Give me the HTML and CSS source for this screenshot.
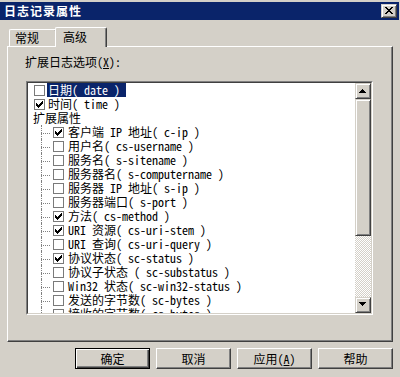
FILE: index.html
```html
<!DOCTYPE html>
<html lang="zh-CN">
<head>
<meta charset="utf-8">
<title>日志记录属性</title>
<link rel="stylesheet" href="styles.css">
</head>
<body>
<div class="window">
  <div class="titlebar">
    <span class="title">日志记录属性</span>
    <span class="close"><svg width="8" height="7" viewBox="0 0 8 7" shape-rendering="crispEdges"><path d="M0 0h2v1H0zM6 0h2v1H6zM1 1h2v1H1zM5 1h2v1H5zM2 2h4v1H2zM3 3h2v1H3zM2 4h4v1H2zM1 5h2v1H1zM5 5h2v1H5zM0 6h2v1H0zM6 6h2v1H6z"/></svg></span>
  </div>
  <div class="tabs">
    <div class="tab">常规</div>
    <div class="tab active">高级</div>
  </div>
  <div class="panel">
    <div class="label">扩展日志选项(<u>X</u>):</div>
    <div class="listbox">
      <div class="listbox-inner">
        <div class="items">
          <div class="row top"><span class="cb"></span><span class="text sel">日期( date )</span></div>
          <div class="row top"><span class="cb"><svg class="chk" width="7" height="7" viewBox="0 0 7 7" shape-rendering="crispEdges"><path d="M0 2h1v3H0zM1 3h1v3H1zM2 4h1v3H2zM3 3h1v3H3zM4 2h1v3H4zM5 1h1v3H5zM6 0h1v3H6z"/></svg></span><span class="text">时间( time )</span></div>
          <div class="row group"><span>扩展属性</span></div>
          <div class="row child"><span class="branch"></span><span class="cb"><svg class="chk" width="7" height="7" viewBox="0 0 7 7" shape-rendering="crispEdges"><path d="M0 2h1v3H0zM1 3h1v3H1zM2 4h1v3H2zM3 3h1v3H3zM4 2h1v3H4zM5 1h1v3H5zM6 0h1v3H6z"/></svg></span><span class="text">客户端 IP 地址( c-ip )</span></div>
          <div class="row child"><span class="branch"></span><span class="cb"></span><span class="text">用户名( cs-username )</span></div>
          <div class="row child"><span class="branch"></span><span class="cb"></span><span class="text">服务名( s-sitename )</span></div>
          <div class="row child"><span class="branch"></span><span class="cb"></span><span class="text">服务器名( s-computername )</span></div>
          <div class="row child"><span class="branch"></span><span class="cb"></span><span class="text">服务器 IP 地址( s-ip )</span></div>
          <div class="row child"><span class="branch"></span><span class="cb"></span><span class="text">服务器端口( s-port )</span></div>
          <div class="row child"><span class="branch"></span><span class="cb"><svg class="chk" width="7" height="7" viewBox="0 0 7 7" shape-rendering="crispEdges"><path d="M0 2h1v3H0zM1 3h1v3H1zM2 4h1v3H2zM3 3h1v3H3zM4 2h1v3H4zM5 1h1v3H5zM6 0h1v3H6z"/></svg></span><span class="text">方法( cs-method )</span></div>
          <div class="row child"><span class="branch"></span><span class="cb"><svg class="chk" width="7" height="7" viewBox="0 0 7 7" shape-rendering="crispEdges"><path d="M0 2h1v3H0zM1 3h1v3H1zM2 4h1v3H2zM3 3h1v3H3zM4 2h1v3H4zM5 1h1v3H5zM6 0h1v3H6z"/></svg></span><span class="text">URI 资源( cs-uri-stem )</span></div>
          <div class="row child"><span class="branch"></span><span class="cb"></span><span class="text">URI 查询( cs-uri-query )</span></div>
          <div class="row child"><span class="branch"></span><span class="cb"><svg class="chk" width="7" height="7" viewBox="0 0 7 7" shape-rendering="crispEdges"><path d="M0 2h1v3H0zM1 3h1v3H1zM2 4h1v3H2zM3 3h1v3H3zM4 2h1v3H4zM5 1h1v3H5zM6 0h1v3H6z"/></svg></span><span class="text">协议状态( sc-status )</span></div>
          <div class="row child"><span class="branch"></span><span class="cb"></span><span class="text">协议子状态 ( sc-substatus )</span></div>
          <div class="row child"><span class="branch"></span><span class="cb"></span><span class="text">Win32 状态( sc-win32-status )</span></div>
          <div class="row child"><span class="branch"></span><span class="cb"></span><span class="text">发送的字节数( sc-bytes )</span></div>
          <div class="row child"><span class="branch"></span><span class="cb"></span><span class="text">接收的字节数( cs-bytes )</span></div>
        </div>
        <div class="scrollbar">
          <div class="sb-btn up"><svg width="7" height="4" viewBox="0 0 7 4" shape-rendering="crispEdges"><path d="M3 0h1v1h1v1h1v1h1v1H0V3h1V2h1V1h1z"/></svg></div>
          <div class="thumb"></div>
          <div class="track"></div>
          <div class="sb-btn down"><svg width="7" height="4" viewBox="0 0 7 4" shape-rendering="crispEdges"><path d="M0 0h7v1h-1v1h-1v1h-1v1H3V3H2V2H1V1H0z"/></svg></div>
        </div>
      </div>
    </div>
  </div>
  <div class="buttons">
    <button class="btn default">确定</button>
    <button class="btn">取消</button>
    <button class="btn">应用(<u>A</u>)</button>
    <button class="btn">帮助</button>
  </div>
</div>
</body>
</html>
```

FILE: styles.css
```css
* { box-sizing: border-box; }
html, body { margin: 0; padding: 0; }
body {
  width: 400px;
  height: 377px;
  overflow: hidden;
  background: #d4d0c8;
  font-family: "Noto Sans CJK SC", sans-serif;
  font-size: 12px;
  color: #000;
  font-feature-settings: "hwid" 1;
}
.window {
  height: 377px;
  border-bottom: 1px solid #404040;
  box-shadow: inset 0 -1px #808080;
}
.titlebar {
  margin: 2px 1px 0 0;
  height: 18px;
  background: #0a246a;
  display: flex;
  align-items: center;
  justify-content: space-between;
  padding: 0 2px 0 4px;
}
.title {
  color: #fff;
  font-weight: bold;
  letter-spacing: 1px;
  line-height: 18px;
}
.close {
  width: 16px;
  height: 14px;
  background: #d4d0c8;
  border: 1px solid;
  border-color: #d4d0c8 #404040 #404040 #d4d0c8;
  box-shadow: inset 1px 1px #fff, inset -1px -1px #808080;
  padding: 2px 0 0 3px;
}
.close svg, .sb-btn svg, .chk { display: block; }
.tabs {
  display: flex;
  align-items: flex-end;
  height: 20px;
  margin-top: 6px;
  padding-left: 9px;
}
.tab {
  width: 48px;
  height: 17px;
  background: #d4d0c8;
  border-top: 1px solid #fff;
  border-left: 1px solid #fff;
  border-right: 1px solid #404040;
  box-shadow: inset -1px 0 #808080;
  border-radius: 2px 2px 0 0;
  padding: 1px 0 0 5px;
  line-height: 14px;
}
.tab.active {
  width: 52px;
  height: 20px;
  margin-left: -2px;
  margin-bottom: -1px;
  position: relative;
  z-index: 1;
  padding: 2px 0 0 7px;
}
.panel {
  margin: 0 7px;
  height: 296px;
  border-top: 1px solid #fff;
  border-left: 1px solid #fff;
  border-right: 1px solid #404040;
  border-bottom: 1px solid #404040;
  box-shadow: inset -1px -1px #808080;
  padding: 8px 0 0 17px;
}
.label { height: 14px; line-height: 14px; }
.listbox {
  margin: 12px 0 0 1px;
  width: 347px;
  height: 234px;
  border: 1px solid;
  border-color: #808080 #fff #fff #808080;
}
.listbox-inner {
  height: 100%;
  border: 1px solid;
  border-color: #404040 #d4d0c8 #d4d0c8 #404040;
  display: flex;
}
.items {
  flex: 1;
  min-width: 0;
  overflow: hidden;
  background: #fff;
}
.row {
  height: 14px;
  display: flex;
  align-items: flex-start;
  white-space: nowrap;
  line-height: 14px;
}
.cb {
  flex: none;
  width: 11px;
  height: 11px;
  margin-top: 2px;
  border: 1px solid #7a7a7a;
  background: #fff;
  padding: 1px;
}
.row.top .cb { margin-left: 6px; margin-right: 2px; }
.row.child .cb { margin-right: 3px; }
.row.group { padding-left: 5px; }
.branch {
  flex: none;
  width: 10px;
  height: 14px;
  margin: 0 2px 0 13px;
  border-left: 1px dotted #808080;
  background: linear-gradient(90deg, #808080 1px, transparent 1px) 1px 8px / 2px 1px repeat-x;
}
.text { height: 14px; padding: 0 6px 0 1px; }
.sel { background: #0a246a; color: #fff; }
.scrollbar {
  flex: none;
  width: 16px;
  display: flex;
  flex-direction: column;
}
.sb-btn, .thumb {
  flex: none;
  background: #d4d0c8;
  border: 1px solid;
  border-color: #d4d0c8 #404040 #404040 #d4d0c8;
  box-shadow: inset 1px 1px #fff, inset -1px -1px #808080;
}
.sb-btn { height: 16px; padding-left: 3px; }
.sb-btn.up { padding-top: 5px; }
.sb-btn.down { padding-top: 4px; }
.thumb { height: 137px; }
.track {
  flex: 1;
  background: repeating-conic-gradient(#fff 0 25%, #d4d0c8 0 50%) 0 0 / 2px 2px;
}
.buttons {
  display: flex;
  justify-content: flex-end;
  gap: 6px;
  margin-top: 6px;
  padding-right: 7px;
}
.btn {
  width: 75px;
  height: 21px;
  padding: 0;
  font: inherit;
  color: #000;
  background: #d4d0c8;
  border: 1px solid;
  border-color: #fff #404040 #404040 #fff;
  box-shadow: inset -1px -1px #808080;
  line-height: 14px;
}
.btn.default {
  border-color: #000;
  box-shadow: inset 1px 1px #fff, inset -1px -1px #404040, inset -2px -2px #808080;
}
u { text-decoration: underline; text-underline-offset: 1px; }
```
